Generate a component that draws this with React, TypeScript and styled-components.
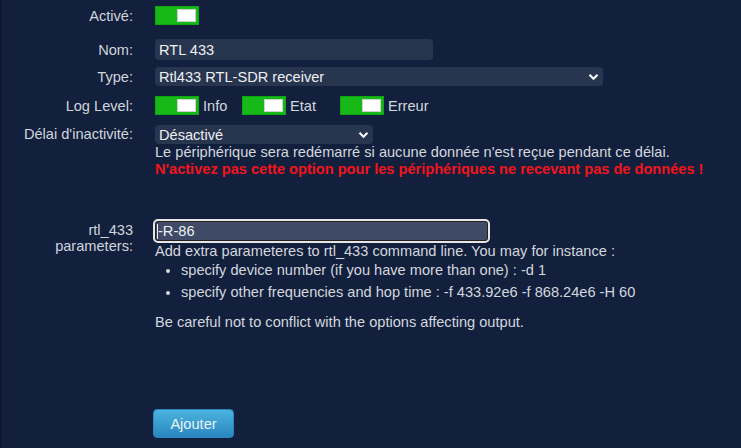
import styled, { createGlobalStyle } from 'styled-components';

const GlobalStyle = createGlobalStyle`
  html, body {
    margin: 0;
    padding: 0;
    background: #12203d;
  }
  body {
    font-family: 'Liberation Sans', Arial, sans-serif;
    font-size: 14.6px;
    color: #d3d7de;
  }
`;

const Page = styled.div`
  width: 741px;
  height: 448px;
  overflow: hidden;
  box-sizing: border-box;
  border-left: 2px solid #0d1833;
  padding-top: 6px;
`;

const Row = styled('div')<{ $mt?: number; $align?: string }>`
  display: grid;
  grid-template-columns: 131px 1fr;
  column-gap: 22px;
  align-items: ${(p) => p.$align || 'center'};
  margin-top: ${(p) => p.$mt || 0}px;
`;

const Label = styled.label`
  text-align: right;
  color: #d0d4db;
  line-height: 16px;
`;

const Content = styled.div`
  display: flex;
  flex-direction: column;
  align-items: flex-start;
`;

const Toggle = styled.span`
  display: inline-block;
  position: relative;
  width: 44px;
  height: 19px;
  box-sizing: border-box;
  background: #16b917;
  border: 1px solid #10a611;
  flex-shrink: 0;
  &::after {
    content: '';
    position: absolute;
    right: 2px;
    top: 2px;
    width: 19px;
    height: 13px;
    box-sizing: border-box;
    background: #fff;
    border: 1px solid #c9d3c9;
  }
`;

const Inline = styled.div`
  display: flex;
  align-items: center;
`;

const ToggleText = styled('span')<{ $w: number }>`
  width: ${(p) => p.$w}px;
  padding-left: 4px;
  box-sizing: border-box;
  color: #d3d7de;
`;

const Field = styled('div')<{ $w: number; $h?: number }>`
  width: ${(p) => p.$w}px;
  height: ${(p) => p.$h || 19}px;
  box-sizing: border-box;
  background: #27354f;
  border-radius: 4px;
  color: #eef0f4;
  display: flex;
  align-items: center;
  justify-content: space-between;
  padding: 0 4px 0 4px;
`;

const Chevron = () => (
  <svg width="11" height="8" viewBox="0 0 11 8">
    <path d="M1.5 1.8 L5.5 5.8 L9.5 1.8" fill="none" stroke="#f4f5f7" strokeWidth="2.2" />
  </svg>
);

const Help = styled('div')<{ $red?: boolean }>`
  line-height: 17px;
  color: ${(p) => (p.$red ? '#f2141b' : '#d3d7de')};
  font-weight: ${(p) => (p.$red ? 700 : 400)};
`;

const ParamInput = styled.div`
  width: 337px;
  height: 24px;
  box-sizing: border-box;
  background: #3e4a66;
  border: 2px solid #e6e6e6;
  border-radius: 5px;
  box-shadow: 0 0 0 1px #12203d, inset 0 0 0 1px #222;
  color: #eef0f4;
  display: flex;
  align-items: center;
  padding-left: 2px;
`;

const Caret = styled.span`
  display: inline-block;
  width: 1px;
  height: 15px;
  background: #f0f0f0;
`;

const List = styled.ul`
  margin: 2px 0 0;
  padding-left: 28px;
  li {
    line-height: 17px;
    margin-bottom: 5px;
  }
`;

const Button = styled.button`
  margin-top: 78px;
  width: 81px;
  height: 29px;
  border: 1px solid #2a86bd;
  border-radius: 4px;
  background: linear-gradient(#4bb4df, #2a86c0);
  color: #eaf4fb;
  font-family: 'Liberation Sans', Arial, sans-serif;
  font-size: 14.6px;
  padding: 0;
`;

export default function App() {
  return (
    <Page>
      <GlobalStyle />
      <Row>
        <Label>Activé:</Label>
        <Content>
          <Toggle />
        </Content>
      </Row>
      <Row $mt={14}>
        <Label>Nom:</Label>
        <Content>
          <Field $w={278} $h={21}>RTL 433</Field>
        </Content>
      </Row>
      <Row $mt={7}>
        <Label>Type:</Label>
        <Content>
          <Field $w={448}>
            Rtl433 RTL-SDR receiver
            <Chevron />
          </Field>
        </Content>
      </Row>
      <Row $mt={10}>
        <Label>Log Level:</Label>
        <Inline>
          <Toggle />
          <ToggleText $w={43}>Info</ToggleText>
          <Toggle />
          <ToggleText $w={54}>Etat</ToggleText>
          <Toggle />
          <ToggleText $w={60}>Erreur</ToggleText>
        </Inline>
      </Row>
      <Row $mt={10} $align="start">
        <Label style={{ lineHeight: '19px' }}>Délai d'inactivité:</Label>
        <Content>
          <Field $w={218}>
            Désactivé
            <Chevron />
          </Field>
          <Help>Le périphérique sera redémarré si aucune donnée n'est reçue pendant ce délai.</Help>
          <Help $red>N'activez pas cette option pour les périphériques ne recevant pas de données !</Help>
        </Content>
      </Row>
      <Row $mt={41} $align="start">
        <Label style={{ paddingTop: 3 }}>
          rtl_433
          <br />
          parameters:
        </Label>
        <Content style={{ marginLeft: -2 }}>
          <ParamInput>
            <Caret />
            -R-86
          </ParamInput>
          <Help style={{ marginLeft: 2 }}>Add extra parameteres to rtl_433 command line. You may for instance :</Help>
          <List>
            <li>specify device number (if you have more than one) : -d 1</li>
            <li>specify other frequencies and hop time : -f 433.92e6 -f 868.24e6 -H 60</li>
          </List>
          <Help style={{ marginLeft: 2, marginTop: 8 }}>Be careful not to conflict with the options affecting output.</Help>
          <Button>Ajouter</Button>
        </Content>
      </Row>
    </Page>
  );
}
